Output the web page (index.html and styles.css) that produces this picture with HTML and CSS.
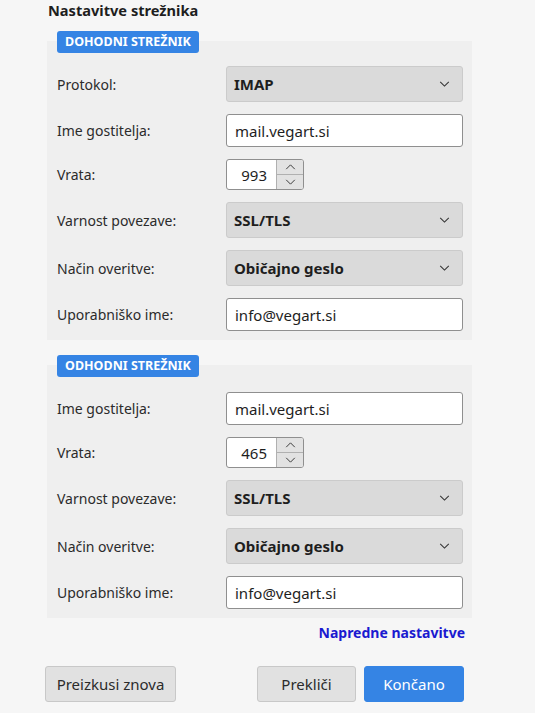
FILE: index.html
```html
<!DOCTYPE html>
<html lang="sl">
<head>
<meta charset="utf-8">
<title>Nastavitve strežnika</title>
<link rel="stylesheet" href="styles.css">
</head>
<body>
<div class="page">
  <h1 class="title">Nastavitve strežnika</h1>

  <section class="panel">
    <div class="badge">DOHODNI STREŽNIK</div>
    <div class="rows">
      <div class="row">
        <span class="label">Protokol:</span>
        <div class="select"><span>IMAP</span><svg class="chev" viewBox="0 0 12 7" width="11" height="6"><path d="M1 1l5 5 5-5" fill="none" stroke="#333" stroke-width="1.2"/></svg></div>
      </div>
      <div class="row">
        <span class="label">Ime gostitelja:</span>
        <div class="input">mail.vegart.si</div>
      </div>
      <div class="row">
        <span class="label">Vrata:</span>
        <div class="spin">
          <div class="spin-val">993</div>
          <div class="spin-btns">
            <div class="spin-btn"><svg viewBox="0 0 12 7" width="11" height="6"><path d="M1 6l5-5 5 5" fill="none" stroke="#333" stroke-width="1.1"/></svg></div>
            <div class="spin-btn"><svg viewBox="0 0 12 7" width="11" height="6"><path d="M1 1l5 5 5-5" fill="none" stroke="#333" stroke-width="1.1"/></svg></div>
          </div>
        </div>
      </div>
      <div class="row">
        <span class="label">Varnost povezave:</span>
        <div class="select"><span>SSL/TLS</span><svg class="chev" viewBox="0 0 12 7" width="11" height="6"><path d="M1 1l5 5 5-5" fill="none" stroke="#333" stroke-width="1.2"/></svg></div>
      </div>
      <div class="row">
        <span class="label">Način overitve:</span>
        <div class="select"><span>Običajno geslo</span><svg class="chev" viewBox="0 0 12 7" width="11" height="6"><path d="M1 1l5 5 5-5" fill="none" stroke="#333" stroke-width="1.2"/></svg></div>
      </div>
      <div class="row">
        <span class="label">Uporabniško ime:</span>
        <div class="input">info@vegart.si</div>
      </div>
    </div>
  </section>

  <section class="panel panel-out">
    <div class="badge">ODHODNI STREŽNIK</div>
    <div class="rows">
      <div class="row">
        <span class="label">Ime gostitelja:</span>
        <div class="input">mail.vegart.si</div>
      </div>
      <div class="row">
        <span class="label">Vrata:</span>
        <div class="spin">
          <div class="spin-val">465</div>
          <div class="spin-btns">
            <div class="spin-btn"><svg viewBox="0 0 12 7" width="11" height="6"><path d="M1 6l5-5 5 5" fill="none" stroke="#333" stroke-width="1.1"/></svg></div>
            <div class="spin-btn"><svg viewBox="0 0 12 7" width="11" height="6"><path d="M1 1l5 5 5-5" fill="none" stroke="#333" stroke-width="1.1"/></svg></div>
          </div>
        </div>
      </div>
      <div class="row">
        <span class="label">Varnost povezave:</span>
        <div class="select"><span>SSL/TLS</span><svg class="chev" viewBox="0 0 12 7" width="11" height="6"><path d="M1 1l5 5 5-5" fill="none" stroke="#333" stroke-width="1.2"/></svg></div>
      </div>
      <div class="row">
        <span class="label">Način overitve:</span>
        <div class="select"><span>Običajno geslo</span><svg class="chev" viewBox="0 0 12 7" width="11" height="6"><path d="M1 1l5 5 5-5" fill="none" stroke="#333" stroke-width="1.2"/></svg></div>
      </div>
      <div class="row">
        <span class="label">Uporabniško ime:</span>
        <div class="input">info@vegart.si</div>
      </div>
    </div>
  </section>

  <div class="adv"><a href="#" class="adv-link">Napredne nastavitve</a></div>

  <div class="actions">
    <button class="btn">Preizkusi znova</button>
    <div class="actions-right">
      <button class="btn btn-cancel">Prekliči</button>
      <button class="btn btn-primary">Končano</button>
    </div>
  </div>
</div>
</body>
</html>
```

FILE: styles.css
```css
* { box-sizing: border-box; }
html, body {
  margin: 0;
  padding: 0;
  background: #f6f6f6;
}
body {
  font-family: "Noto Sans", "Open Sans", sans-serif;
  font-size: 14px;
  color: #2b2b2b;
  width: 535px;
  height: 713px;
  overflow: hidden;
}
.page {
  padding: 0 0 0 47px;
  width: 472px;
  box-sizing: content-box;
}
.title {
  margin: 0 0 0 1px;
  font-size: 14.6px;
  font-weight: 700;
  line-height: 20px;
  color: #1e1e1e;
}
.panel {
  margin-top: 21px;
  width: 425px;
  background: #efefef;
  padding: 0 9px 9px 10px;
}
.panel-out {
  margin-top: 25px;
}
.badge {
  display: inline-block;
  margin-top: -10px;
  height: 22px;
  line-height: 22px;
  padding: 0 8px;
  background: #3584e4;
  color: #fff;
  font-size: 12.5px;
  font-weight: 700;
  border-radius: 3px;
  margin-bottom: 13px;
  vertical-align: top;
}
.panel-out .badge {
  margin-bottom: 15px;
}
.rows {
  display: flex;
  flex-direction: column;
  gap: 12px;
}
.row {
  display: grid;
  grid-template-columns: 169px 237px;
  align-items: center;
}
.label {
  color: #2b2b2b;
}
.select {
  height: 36px;
  background: #dadada;
  border: 1px solid #cbcbcb;
  border-radius: 3px;
  display: flex;
  align-items: center;
  justify-content: space-between;
  padding: 0 12px 0 7px;
  font-weight: 700;
  font-size: 15px;
  color: #1e1e1e;
}
.chev { display: block; }
.input {
  height: 33px;
  background: #fff;
  border: 1px solid #8f8f8f;
  border-radius: 3px;
  display: flex;
  align-items: center;
  padding: 0 8px;
  font-size: 15px;
  color: #1e1e1e;
}
.spin {
  width: 78px;
  height: 31px;
  display: flex;
  border: 1px solid #8f8f8f;
  border-radius: 3px;
  background: #fff;
  overflow: hidden;
}
.spin-val {
  width: 50px;
  display: flex;
  align-items: center;
  justify-content: flex-end;
  padding-right: 9px;
  font-size: 15px;
  color: #1e1e1e;
  border-right: 1px solid #b0b0b0;
}
.spin-btns {
  flex: 1;
  display: flex;
  flex-direction: column;
}
.spin-btn {
  flex: 1;
  background: #e2e2e2;
  display: flex;
  align-items: center;
  justify-content: center;
}
.spin-btn + .spin-btn {
  border-top: 1px solid #b0b0b0;
}
.adv {
  width: 418px;
  text-align: right;
  margin-top: 5px;
  line-height: 20px;
}
.adv-link {
  color: #1a1ad0;
  font-weight: 700;
  font-size: 14px;
  text-decoration: none;
}
.actions {
  margin-top: 23px;
  width: 419px;
  margin-left: -2px;
  display: flex;
  justify-content: space-between;
}
.actions-right {
  display: flex;
  gap: 8px;
}
.btn {
  height: 36px;
  font-family: inherit;
  font-size: 15px;
  color: #2b2b2b;
  background: #e1e1e1;
  border: 1px solid #c8c8c8;
  border-radius: 3px;
  padding: 0;
  width: 131px;
}
.btn-cancel {
  width: 99px;
}
.btn-primary {
  width: 100px;
  background: #3584e4;
  border-color: #3584e4;
  color: #fff;
}
```
